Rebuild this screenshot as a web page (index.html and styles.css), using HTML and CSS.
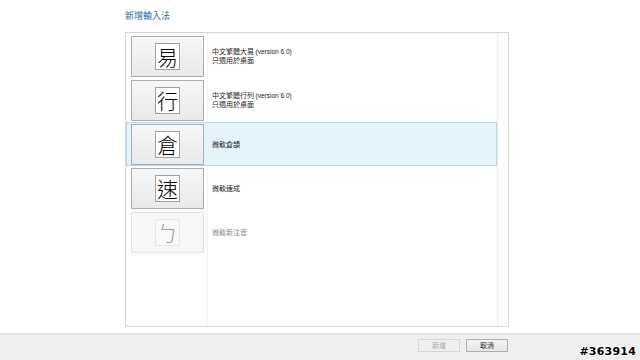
FILE: index.html
```html
<!DOCTYPE html>
<html lang="zh-Hant">
<head>
<meta charset="utf-8">
<title>新增輸入法</title>
<link rel="stylesheet" href="styles.css">
</head>
<body>
<div class="main">
  <h1 class="title">新增輸入法</h1>
  <div class="list">
    <div class="row">
      <div class="key"><span class="glyph">易</span></div>
      <div class="label"><div>中文繁體大易 <span class="lat">(version 6.0)</span></div><div>只適用於桌面</div></div>
    </div>
    <div class="row">
      <div class="key"><span class="glyph">行</span></div>
      <div class="label"><div>中文繁體行列 <span class="lat">(version 6.0)</span></div><div>只適用於桌面</div></div>
    </div>
    <div class="row selected">
      <div class="key"><span class="glyph">倉</span></div>
      <div class="label"><div>微軟倉頡</div></div>
    </div>
    <div class="row">
      <div class="key"><span class="glyph">速</span></div>
      <div class="label"><div>微軟速成</div></div>
    </div>
    <div class="row disabled">
      <div class="key"><span class="glyph">ㄅ</span></div>
      <div class="label"><div>微軟新注音</div></div>
    </div>
  </div>
</div>
<div class="footer">
  <button class="btn" disabled>新增</button>
  <button class="btn">取消</button>
</div>
<div class="stamp">#363914</div>
</body>
</html>
```
FILE: styles.css
```css
html, body {
  margin: 0;
  padding: 0;
  width: 640px;
  height: 360px;
  overflow: hidden;
  background: #ffffff;
  font-family: "Liberation Sans", "Noto Sans CJK TC", sans-serif;
}
body {
  display: flex;
  flex-direction: column;
  position: relative;
}
.main {
  padding: 9px 0 0 125px;
}
.title {
  margin: 0;
  height: 23px;
  font-size: 9px;
  line-height: 14px;
  font-weight: normal;
  color: #2a5fae;
  font-family: "Noto Sans CJK TC", sans-serif;
}
.list {
  width: 382px;
  height: 292px;
  border: 1px solid #d4d4d4;
  background-color: #ffffff;
  background-image:
    linear-gradient(#eef3f6, #eef3f6),
    linear-gradient(#ececec, #ececec);
  background-size: 1px 100%, 1px 100%;
  background-position: 81px 0, 371px 0;
  background-repeat: no-repeat;
  display: flex;
  flex-direction: column;
  padding-top: 1px;
  box-sizing: content-box;
}
.row {
  width: 371px;
  height: 44px;
  box-sizing: border-box;
  border: 1px solid transparent;
  display: flex;
  align-items: center;
  padding-left: 4px;
}
.row.selected {
  background: #e5f3fb;
  border-color: #b3dbef;
}
.key {
  width: 73px;
  height: 41px;
  box-sizing: border-box;
  border: 1px solid #adadad;
  background: linear-gradient(#f7f7f7, #e9e9e9);
  display: flex;
  align-items: center;
  justify-content: center;
}
.glyph {
  width: 25px;
  height: 27px;
  box-sizing: border-box;
  border: 1px solid #a0a0a0;
  background: #ffffff;
  color: #000000;
  font-family: "Noto Sans CJK TC", sans-serif;
  font-weight: 300;
  font-size: 21px;
  line-height: 25px;
  text-align: center;
}
.label {
  margin-left: 8px;
  font-size: 7px;
  line-height: 9px;
  color: #222222;
  font-family: "Noto Sans CJK TC", sans-serif;
}
.lat {
  font-family: "Liberation Sans", sans-serif;
  font-size: 6.5px;
}
.row.disabled .key {
  border-color: #e2e2e2;
  background: #f7f7f7;
}
.row.disabled .glyph {
  border-color: #e6e6e6;
  background: #f9f9f9;
  color: #9a9a9a;
}
.row.disabled .label {
  color: #8a8a8a;
}
.footer {
  margin-top: auto;
  height: 21px;
  border-top: 2px solid #e3e3e3;
  background: #efefef;
  display: flex;
  justify-content: flex-end;
  align-items: flex-start;
  gap: 6px;
  padding: 4px 132px 0 0;
  box-sizing: content-box;
}
.btn {
  width: 42px;
  height: 13px;
  margin: 0;
  padding: 0;
  border: 1px solid #adadad;
  background: linear-gradient(#f4f4f4, #e6e6e6);
  font-family: "Noto Sans CJK TC", sans-serif;
  font-size: 7px;
  line-height: 11px;
  color: #222222;
}
.btn:disabled {
  border-color: #d6d6d6;
  background: #f0f0f0;
  color: #a8a8a8;
}
.stamp {
  position: absolute;
  right: 4px;
  bottom: 2px;
  font-family: "DejaVu Sans", sans-serif;
  font-weight: bold;
  font-size: 11px;
  line-height: 12px;
  color: #000000;
  letter-spacing: 0.2px;
  text-shadow: -1px 0 #fff, 1px 0 #fff, 0 -1px #fff, 0 1px #fff;
}
```
